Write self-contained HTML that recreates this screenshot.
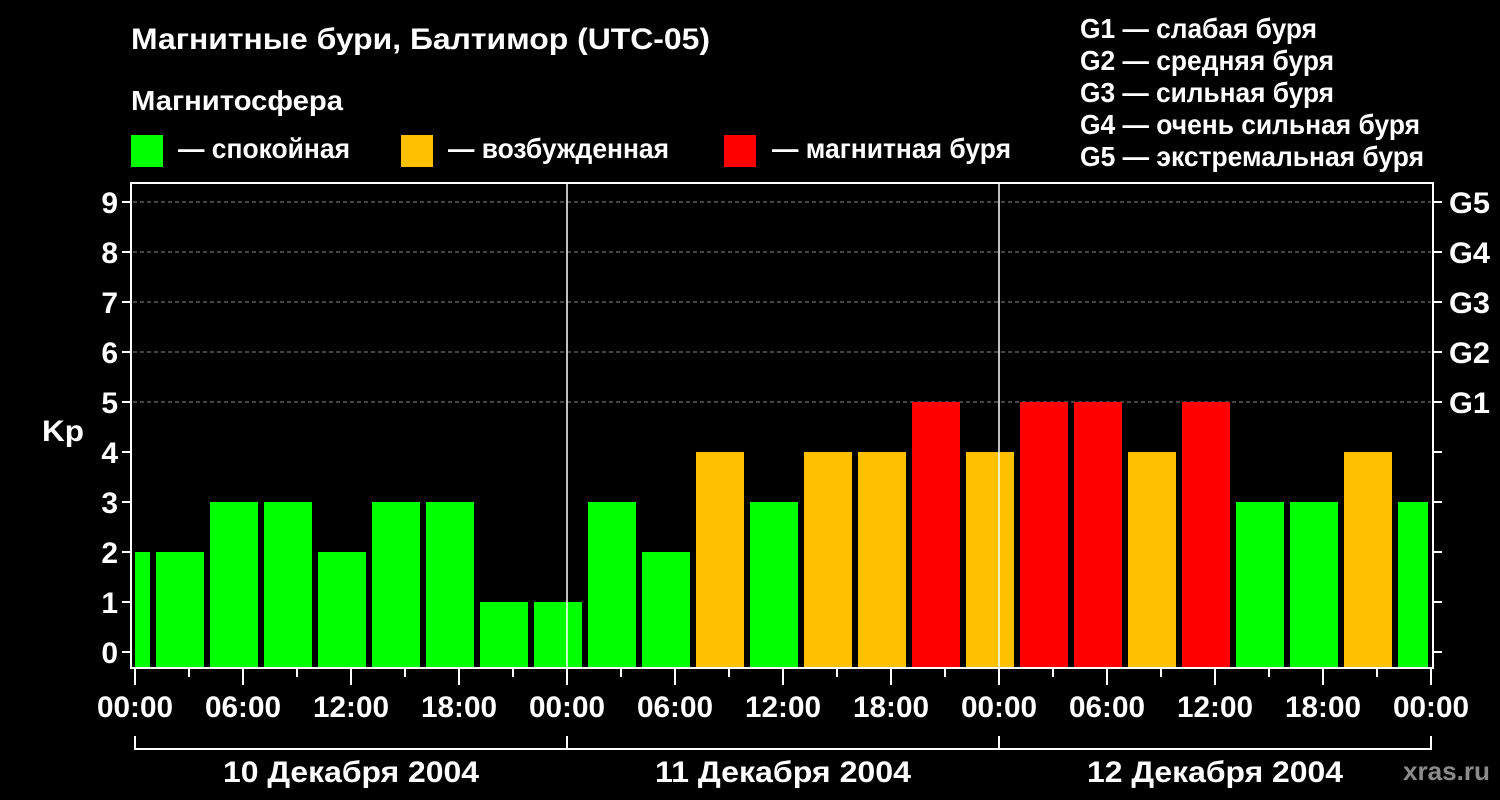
<!DOCTYPE html>
<html><head><meta charset="utf-8"><style>html,body{margin:0;padding:0;background:#000}svg{display:block}</style></head>
<body>
<svg width="1500" height="800" xmlns="http://www.w3.org/2000/svg" font-family="Liberation Sans, Arial, sans-serif" font-weight="bold" fill="#fff">
<rect width="1500" height="800" fill="#000"/>
<text x="131" y="49" font-size="30" textLength="579" lengthAdjust="spacingAndGlyphs">Магнитные бури, Балтимор (UTC-05)</text>
<text x="131" y="110" font-size="28" textLength="212" lengthAdjust="spacingAndGlyphs">Магнитосфера</text>
<rect x="131" y="135" width="32" height="32" fill="#00ff00"/>
<rect x="401" y="135" width="32" height="32" fill="#ffc000"/>
<rect x="724" y="135" width="32" height="32" fill="#ff0000"/>
<text x="178" y="158" font-size="28" textLength="172" lengthAdjust="spacingAndGlyphs">— спокойная</text>
<text x="448" y="158" font-size="28" textLength="221" lengthAdjust="spacingAndGlyphs">— возбужденная</text>
<text x="772" y="158" font-size="28" textLength="239" lengthAdjust="spacingAndGlyphs">— магнитная буря</text>
<g font-size="28">
<text x="1080" y="38" textLength="237" lengthAdjust="spacingAndGlyphs">G1 — слабая буря</text>
<text x="1080" y="70" textLength="254" lengthAdjust="spacingAndGlyphs">G2 — средняя буря</text>
<text x="1080" y="102" textLength="254" lengthAdjust="spacingAndGlyphs">G3 — сильная буря</text>
<text x="1080" y="134" textLength="340" lengthAdjust="spacingAndGlyphs">G4 — очень сильная буря</text>
<text x="1080" y="166" textLength="344" lengthAdjust="spacingAndGlyphs">G5 — экстремальная буря</text>
</g>
<g stroke="#888" stroke-width="1" stroke-dasharray="4,3">
<line x1="133" y1="202" x2="1431" y2="202"/>
<line x1="133" y1="252" x2="1431" y2="252"/>
<line x1="133" y1="302" x2="1431" y2="302"/>
<line x1="133" y1="352" x2="1431" y2="352"/>
<line x1="133" y1="402" x2="1431" y2="402"/>
</g>
<g>
<rect x="135" y="552" width="15" height="116" fill="#00ff00"/>
<rect x="156" y="552" width="48" height="116" fill="#00ff00"/>
<rect x="210" y="502" width="48" height="166" fill="#00ff00"/>
<rect x="264" y="502" width="48" height="166" fill="#00ff00"/>
<rect x="318" y="552" width="48" height="116" fill="#00ff00"/>
<rect x="372" y="502" width="48" height="166" fill="#00ff00"/>
<rect x="426" y="502" width="48" height="166" fill="#00ff00"/>
<rect x="480" y="602" width="48" height="66" fill="#00ff00"/>
<rect x="534" y="602" width="48" height="66" fill="#00ff00"/>
<rect x="588" y="502" width="48" height="166" fill="#00ff00"/>
<rect x="642" y="552" width="48" height="116" fill="#00ff00"/>
<rect x="696" y="452" width="48" height="216" fill="#ffc000"/>
<rect x="750" y="502" width="48" height="166" fill="#00ff00"/>
<rect x="804" y="452" width="48" height="216" fill="#ffc000"/>
<rect x="858" y="452" width="48" height="216" fill="#ffc000"/>
<rect x="912" y="402" width="48" height="266" fill="#ff0000"/>
<rect x="966" y="452" width="48" height="216" fill="#ffc000"/>
<rect x="1020" y="402" width="48" height="266" fill="#ff0000"/>
<rect x="1074" y="402" width="48" height="266" fill="#ff0000"/>
<rect x="1128" y="452" width="48" height="216" fill="#ffc000"/>
<rect x="1182" y="402" width="48" height="266" fill="#ff0000"/>
<rect x="1236" y="502" width="48" height="166" fill="#00ff00"/>
<rect x="1290" y="502" width="48" height="166" fill="#00ff00"/>
<rect x="1344" y="452" width="48" height="216" fill="#ffc000"/>
<rect x="1398" y="502" width="30" height="166" fill="#00ff00"/>
</g>
<g stroke="#fff" stroke-width="1.5">
<line x1="567" y1="183" x2="567" y2="668"/>
<line x1="999" y1="183" x2="999" y2="668"/>
</g>
<g stroke="#fff" stroke-width="2" fill="none">
<path d="M131 183 V668 H1433 V183 Z"/>
<path d="M122 202H131M122 252H131M122 302H131M122 352H131M122 402H131M122 452H131M122 502H131M122 552H131M122 602H131M122 652H131"/>
<path d="M1433 202H1442M1433 252H1442M1433 302H1442M1433 352H1442M1433 402H1442M1433 452H1442M1433 502H1442M1433 552H1442M1433 602H1442M1433 652H1442"/>
<path d="M135 668V685M243 668V685M351 668V685M459 668V685M567 668V685M675 668V685M783 668V685M891 668V685M999 668V685M1107 668V685M1215 668V685M1323 668V685M1431 668V685"/>
<path d="M189 668V677M297 668V677M405 668V677M513 668V677M621 668V677M729 668V677M837 668V677M945 668V677M1053 668V677M1161 668V677M1269 668V677M1377 668V677"/>
<path d="M135 736V749H1431V736M567 736V749M999 736V749"/>
</g>
<g font-size="30" text-anchor="end">
<text x="118" y="213">9</text><text x="118" y="263">8</text><text x="118" y="313">7</text><text x="118" y="363">6</text><text x="118" y="413">5</text><text x="118" y="463">4</text><text x="118" y="513">3</text><text x="118" y="563">2</text><text x="118" y="613">1</text><text x="118" y="663">0</text>
</g>
<text x="42" y="441" font-size="30" textLength="42" lengthAdjust="spacingAndGlyphs">Kp</text>
<g font-size="30">
<text x="1449" y="213" textLength="41" lengthAdjust="spacingAndGlyphs">G5</text><text x="1449" y="263" textLength="41" lengthAdjust="spacingAndGlyphs">G4</text><text x="1449" y="313" textLength="41" lengthAdjust="spacingAndGlyphs">G3</text><text x="1449" y="363" textLength="41" lengthAdjust="spacingAndGlyphs">G2</text><text x="1449" y="413" textLength="41" lengthAdjust="spacingAndGlyphs">G1</text>
</g>
<g font-size="30" text-anchor="middle" lengthAdjust="spacingAndGlyphs">
<text x="135" y="717" textLength="76" lengthAdjust="spacingAndGlyphs">00:00</text><text x="243" y="717" textLength="76" lengthAdjust="spacingAndGlyphs">06:00</text><text x="351" y="717" textLength="76" lengthAdjust="spacingAndGlyphs">12:00</text><text x="459" y="717" textLength="76" lengthAdjust="spacingAndGlyphs">18:00</text>
<text x="567" y="717" textLength="76" lengthAdjust="spacingAndGlyphs">00:00</text><text x="675" y="717" textLength="76" lengthAdjust="spacingAndGlyphs">06:00</text><text x="783" y="717" textLength="76" lengthAdjust="spacingAndGlyphs">12:00</text><text x="891" y="717" textLength="76" lengthAdjust="spacingAndGlyphs">18:00</text>
<text x="999" y="717" textLength="76" lengthAdjust="spacingAndGlyphs">00:00</text><text x="1107" y="717" textLength="76" lengthAdjust="spacingAndGlyphs">06:00</text><text x="1215" y="717" textLength="76" lengthAdjust="spacingAndGlyphs">12:00</text><text x="1323" y="717" textLength="76" lengthAdjust="spacingAndGlyphs">18:00</text>
<text x="1431" y="717" textLength="76" lengthAdjust="spacingAndGlyphs">00:00</text>
<text x="351" y="782" textLength="256" lengthAdjust="spacingAndGlyphs">10 Декабря 2004</text>
<text x="783" y="782" textLength="256" lengthAdjust="spacingAndGlyphs">11 Декабря 2004</text>
<text x="1215" y="782" textLength="256" lengthAdjust="spacingAndGlyphs">12 Декабря 2004</text>
</g>
<text x="1403" y="780" font-size="26" fill="#8a8a8a" textLength="87" lengthAdjust="spacingAndGlyphs">xras.ru</text>
</svg>
</body></html>
